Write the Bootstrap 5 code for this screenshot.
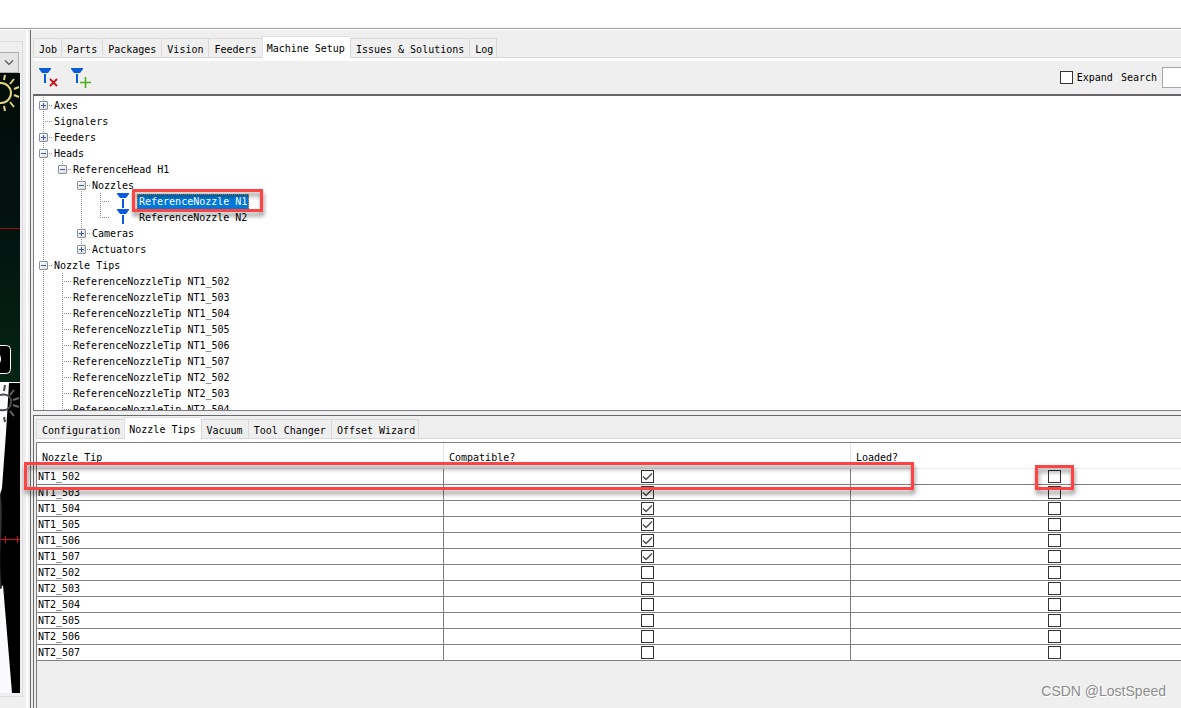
<!DOCTYPE html>
<html lang="en">
<head>
<meta charset="utf-8">
<meta name="viewport" content="width=device-width, initial-scale=1">
<title>Machine Setup</title>
<link href="https://cdn.jsdelivr.net/npm/bootstrap@5.3.0/dist/css/bootstrap.min.css" rel="stylesheet">
<style>
  body { font: 10px/16px "DejaVu Sans Mono", monospace; color: #000; background: #efefef; overflow: hidden; }
  .titlebar { height: 29px; background: #fff; border-bottom: 1px solid #a0a0a0; }
  .workspace { border-top: 1px solid #fff; }
  .camera-dock { width: 31px; padding: 11px 7px 10px 0; border-right: 1px solid #6b6b6b; background: linear-gradient(#fff, #fff) 26px 0 / 2px 100% no-repeat; }
  .camera-group { border: 1px solid #dcdce4; border-left: 0; padding: 10px 3px 3px 0; }
  .camera-pick { position: relative; height: 21px; }
  .camera-pick select { width: 100%; height: 21px; appearance: none; border: 1px solid #adadad; border-left: 0; background: #e5e5e5; border-radius: 0; padding: 0; }
  .camera-pick svg { position: absolute; right: 5px; top: 8px; pointer-events: none; }
  .camera-view { display: block; width: 20px; height: 310px; }
  .right-pane { min-width: 0; padding: 6px 0 0 2px; }

  .swing-tabs { border-bottom: 1px solid #d9d9d9; align-items: flex-end; flex-wrap: nowrap; }
  .swing-tabs .nav-link { border: 1px solid #d9d9d9; border-right: 0; border-bottom: 0; border-radius: 0; margin: 0; padding: 3px 5px 0; height: 19px; line-height: 16px; color: #000; background: #efefef; white-space: nowrap; }
  .swing-tabs .nav-item:first-child .nav-link { padding-right: 4px; }
  .swing-tabs .nav-link.active { height: 22px; margin-bottom: -1px; padding: 3px 5px 0 4px; background: #fff; color: #000; }
  .swing-tabs .nav-item:last-child .nav-link { border-right: 1px solid #d9d9d9; padding-right: 3px; }
  .tab-lip { height: 3px; background: #fff; }

  .toolbar { height: 33px; padding: 0 0 0 6px; }
  .tool { border: 0; background: none; padding: 0; width: 20px; height: 20px; display: flex; }
  .tick { appearance: none; display: block; width: 13px; height: 13px; margin: 0; border: 1px solid #333; border-radius: 0; background: #fff; }
  .tick:checked { background: #fff url("data:image/svg+xml,%3Csvg xmlns='http://www.w3.org/2000/svg' viewBox='0 0 11 11'%3E%3Cpath d='M1 5.5l3 3L10 2.500' fill='none' stroke='%23444' stroke-width='1.300'/%3E%3C/svg%3E"); }
  .search-box { width: 19px; height: 21px; margin-left: 5px; border: 1px solid #a5a5aa; border-right: 0; padding: 0 2px; background: #fff; }

  .tree-pane { height: 317px; border: solid #7f7b86; border-width: 2px 0 1px 1px; border-top-color: #696469; padding-top: 1px; background: #fff; overflow: hidden; }
  .tree, .tree ul { list-style: none; margin: 0; padding: 0; }
  .tree li { --dots: #909090; padding-left: 19px;
    background:
      repeating-linear-gradient(var(--dots) 0 1px, transparent 1px 2px) 9px 0 / 1px 100% no-repeat,
      repeating-linear-gradient(90deg, var(--dots) 0 1px, transparent 1px 2px) 9px 8px / 10px 1px no-repeat; }
  .tree li:last-child:not(.continues) { background-size: 1px 9px, 10px 1px; }
  .node { display: flex; align-items: center; height: 16px; white-space: nowrap; padding: 2px 0 0 1px; position: relative; }
  .twist { width: 9px; height: 9px; flex: none; margin: 0 6px 2px -15px; padding: 0; border: 1px solid #8a8f98; border-radius: 1px; display: flex;
    background: linear-gradient(#3a5aa8, #3a5aa8) 1px 3px / 5px 1px no-repeat, linear-gradient(135deg, #fff, #dcdcdc); }
  .twist.closed { background: linear-gradient(#3a5aa8, #3a5aa8) 1px 3px / 5px 1px no-repeat, linear-gradient(#3a5aa8, #3a5aa8) 3px 1px / 1px 5px no-repeat, linear-gradient(135deg, #fff, #dcdcdc); }
  .nozzle { flex: none; margin: 0 10px 2px 6px; }
  .picked { background: #0078d7; color: #fff; outline: 1px dotted #e8913a; outline-offset: -1px; padding: 0 2px; margin-left: -2px; }

  .lower-pane { border: solid #696969; border-width: 1px 0 0 1px; margin-top: 4px; padding: 1px 0 0 2px; }
  .grid-wrap { position: relative; }
  .grid-clip { overflow: hidden; border: solid #7f7b86; border-width: 1px 0 0 1px; }
  .tips { width: 1221px; table-layout: fixed; border-collapse: separate; border-spacing: 0; background: #fff; }
  .tips th { height: 26px; padding: 4px 5px 0; line-height: 16px; font-weight: 400; border-right: 1px solid #e5e5e5; border-bottom: 1px solid #ececec; }
  .tips td { height: 16px; padding: 0 1px; line-height: 15px; border-right: 1px solid #808080; border-bottom: 1px solid #808080; }
  .tips .tick { margin: 0 auto; }

  .callout { position: absolute; border: 3px solid #ff4343; filter: drop-shadow(1px 4px 2px rgba(0,0,0,.45)); pointer-events: none; z-index: 2; }
  .callout-node { left: 22px; top: -4px; width: 131px; height: 23px; }
  .callout-row { left: -12px; top: 20px; width: 890px; height: 28px; }
  .callout-loaded { left: 999px; top: 23px; width: 39px; height: 25px; }
  .watermark { position: absolute; right: 15px; bottom: 8px; font: 14px/18px "Liberation Sans", sans-serif; color: #8d8d8d; text-shadow: 1px 1px 0 #fff; }
</style>
</head>
<body>
<svg width="0" height="0" class="position-absolute" aria-hidden="true">
  <symbol id="nozzle" viewBox="0 0 12 16"><path d="M0 0H12V1L9 5H3L0 1Z M5 6H7V15H5Z" fill="#0a5bdc"/></symbol>
</svg>
<div class="d-flex flex-column vh-100">
  <header class="titlebar flex-shrink-0"></header>
  <div class="workspace d-flex flex-grow-1">
    <aside class="camera-dock flex-shrink-0">
      <div class="camera-group">
        <div class="camera-pick">
          <select aria-label="Camera"><option></option></select>
          <svg width="10" height="6" viewBox="0 0 10 6"><path d="M1 .5L5 4.500L9 .5" fill="none" stroke="#555" stroke-width="1.200"/></svg>
        </div>
        <svg class="camera-view" viewBox="0 0 20 310">
          <defs><linearGradient id="pcb" x2="0" y2="1"><stop offset="0" stop-color="#020b08"/><stop offset=".5" stop-color="#031310"/><stop offset="1" stop-color="#042413"/></linearGradient></defs>
          <rect width="20" height="310" fill="url(#pcb)"/>
          <g fill="none" stroke="#ded57c" stroke-width="2"><circle cx="1" cy="20" r="10"/><path d="M4 7L5 2M10 11L14 6M14 16L19 14M14 22L19 24M10 29L14 34M4 33L5 38"/></g>
          <path d="M0 155.500H20" stroke="#a00d12"/>
          <rect x="-10" y="272.500" width="20.500" height="28" rx="4" fill="#000" stroke="#fff"/>
          <path d="M0 282Q2 286 0 290Z" fill="#fff"/>
          <path d="M0 309.500H20" stroke="#fff"/>
        </svg>
        <svg class="camera-view" viewBox="0 0 20 310">
          <rect width="20" height="310" fill="#000"/>
          <path d="M0 0H9L6 50L2 105L0 112Z M0 206L3 202L12 310H0Z" fill="#fafafc"/>
          <path d="M0 108Q3 124 1 155T2 205L0 206Z" fill="#333"/>
          <g fill="none" stroke="#4a4a4a" stroke-width="2"><path d="M0 12C7 10 12 14 11 20S7 28 0 27M4 8L5 2M4 34L5 39"/><path d="M10 12L14 7M13 17L19 15M13 22L19 24M10 28L14 33" stroke="#666"/></g>
          <path d="M0 156.500H20M5.500 153V160M17.500 153V160" stroke="#c4161a" fill="none"/>
        </svg>
      </div>
    </aside>

    <main class="right-pane flex-grow-1 d-flex flex-column">
      <ul class="nav nav-tabs swing-tabs">
        <li class="nav-item"><button class="nav-link">Job</button></li>
        <li class="nav-item"><button class="nav-link">Parts</button></li>
        <li class="nav-item"><button class="nav-link">Packages</button></li>
        <li class="nav-item"><button class="nav-link">Vision</button></li>
        <li class="nav-item"><button class="nav-link">Feeders</button></li>
        <li class="nav-item"><button class="nav-link active">Machine Setup</button></li>
        <li class="nav-item"><button class="nav-link">Issues &amp; Solutions</button></li>
        <li class="nav-item"><button class="nav-link">Log</button></li>
      </ul>
      <div class="tab-lip"></div>
      <div class="toolbar d-flex align-items-center justify-content-between flex-shrink-0">
        <div class="d-flex gap-2">
          <button class="tool me-1" aria-label="Remove nozzle"><svg width="20" height="20" viewBox="0 0 20 20"><path d="M0 0H12V1L9 5H3L0 1Z M5 6H7V15H5Z" fill="#0a5bdc"/><path d="M11 11L18 18M18 11L11 18" stroke="#c8141c" stroke-width="1.800"/></svg></button>
          <button class="tool" aria-label="Add nozzle"><svg width="20" height="20" viewBox="0 0 20 20"><path d="M0 0H12V1L9 5H3L0 1Z M5 6H7V15H5Z" fill="#0a5bdc"/><path d="M9 14.500H20M14.500 9V20" stroke="#4caf14" stroke-width="1.600"/></svg></button>
        </div>
        <div class="d-flex align-items-center">
          <input class="tick" type="checkbox" id="expand"><label for="expand" class="ms-1 me-2">Expand</label>
          <label for="search">Search</label><input class="search-box" type="text" id="search">
        </div>
      </div>

      <div class="tree-pane flex-shrink-0">
        <ul class="tree">
          <li><div class="node"><button class="twist closed" aria-label="Open Axes"></button>Axes</div></li>
          <li><div class="node">Signalers</div></li>
          <li><div class="node"><button class="twist closed" aria-label="Open Feeders"></button>Feeders</div></li>
          <li><div class="node"><button class="twist" aria-label="Close Heads"></button>Heads</div>
            <ul><li><div class="node"><button class="twist" aria-label="Close head H1"></button>ReferenceHead H1</div>
              <ul>
                <li><div class="node"><button class="twist" aria-label="Close Nozzles"></button>Nozzles</div>
                  <ul>
                    <li><div class="node"><svg class="nozzle" width="12" height="16"><use href="#nozzle"/></svg><span class="picked">ReferenceNozzle N1</span><span class="callout callout-node"></span></div></li>
                    <li><div class="node"><svg class="nozzle" width="12" height="16"><use href="#nozzle"/></svg>ReferenceNozzle N2</div></li>
                  </ul></li>
                <li><div class="node"><button class="twist closed" aria-label="Open Cameras"></button>Cameras</div></li>
                <li><div class="node"><button class="twist closed" aria-label="Open Actuators"></button>Actuators</div></li>
              </ul></li></ul></li>
          <li class="continues"><div class="node"><button class="twist" aria-label="Close Nozzle Tips"></button>Nozzle Tips</div>
            <ul>
              <li><div class="node">ReferenceNozzleTip NT1_502</div></li>
              <li><div class="node">ReferenceNozzleTip NT1_503</div></li>
              <li><div class="node">ReferenceNozzleTip NT1_504</div></li>
              <li><div class="node">ReferenceNozzleTip NT1_505</div></li>
              <li><div class="node">ReferenceNozzleTip NT1_506</div></li>
              <li><div class="node">ReferenceNozzleTip NT1_507</div></li>
              <li><div class="node">ReferenceNozzleTip NT2_502</div></li>
              <li><div class="node">ReferenceNozzleTip NT2_503</div></li>
              <li class="continues"><div class="node">ReferenceNozzleTip NT2_504</div></li>
            </ul></li>
        </ul>
      </div>

      <section class="lower-pane flex-grow-1 d-flex flex-column">
        <ul class="nav nav-tabs swing-tabs">
          <li class="nav-item"><button class="nav-link">Configuration</button></li>
          <li class="nav-item"><button class="nav-link active">Nozzle Tips</button></li>
          <li class="nav-item"><button class="nav-link">Vacuum</button></li>
          <li class="nav-item"><button class="nav-link">Tool Changer</button></li>
          <li class="nav-item"><button class="nav-link">Offset Wizard</button></li>
        </ul>
        <div class="tab-lip"></div>
        <div class="grid-wrap flex-grow-1 d-flex flex-column">
          <div class="grid-clip flex-grow-1">
            <table class="tips">
              <thead><tr><th>Nozzle Tip</th><th>Compatible?</th><th>Loaded?</th></tr></thead>
              <tbody>
                <tr><td>NT1_502</td><td><input class="tick" type="checkbox" aria-label="NT1_502 compatible" checked></td><td><input class="tick" type="checkbox" aria-label="NT1_502 loaded"></td></tr>
                <tr><td>NT1_503</td><td><input class="tick" type="checkbox" aria-label="NT1_503 compatible" checked></td><td><input class="tick" type="checkbox" aria-label="NT1_503 loaded"></td></tr>
                <tr><td>NT1_504</td><td><input class="tick" type="checkbox" aria-label="NT1_504 compatible" checked></td><td><input class="tick" type="checkbox" aria-label="NT1_504 loaded"></td></tr>
                <tr><td>NT1_505</td><td><input class="tick" type="checkbox" aria-label="NT1_505 compatible" checked></td><td><input class="tick" type="checkbox" aria-label="NT1_505 loaded"></td></tr>
                <tr><td>NT1_506</td><td><input class="tick" type="checkbox" aria-label="NT1_506 compatible" checked></td><td><input class="tick" type="checkbox" aria-label="NT1_506 loaded"></td></tr>
                <tr><td>NT1_507</td><td><input class="tick" type="checkbox" aria-label="NT1_507 compatible" checked></td><td><input class="tick" type="checkbox" aria-label="NT1_507 loaded"></td></tr>
                <tr><td>NT2_502</td><td><input class="tick" type="checkbox" aria-label="NT2_502 compatible"></td><td><input class="tick" type="checkbox" aria-label="NT2_502 loaded"></td></tr>
                <tr><td>NT2_503</td><td><input class="tick" type="checkbox" aria-label="NT2_503 compatible"></td><td><input class="tick" type="checkbox" aria-label="NT2_503 loaded"></td></tr>
                <tr><td>NT2_504</td><td><input class="tick" type="checkbox" aria-label="NT2_504 compatible"></td><td><input class="tick" type="checkbox" aria-label="NT2_504 loaded"></td></tr>
                <tr><td>NT2_505</td><td><input class="tick" type="checkbox" aria-label="NT2_505 compatible"></td><td><input class="tick" type="checkbox" aria-label="NT2_505 loaded"></td></tr>
                <tr><td>NT2_506</td><td><input class="tick" type="checkbox" aria-label="NT2_506 compatible"></td><td><input class="tick" type="checkbox" aria-label="NT2_506 loaded"></td></tr>
                <tr><td>NT2_507</td><td><input class="tick" type="checkbox" aria-label="NT2_507 compatible"></td><td><input class="tick" type="checkbox" aria-label="NT2_507 loaded"></td></tr>
              </tbody>
            </table>
          </div>
          <div class="callout callout-row"></div>
          <div class="callout callout-loaded"></div>
          <div class="watermark">CSDN @LostSpeed</div>
        </div>
      </section>
    </main>
  </div>
</div>
<script src="https://cdn.jsdelivr.net/npm/bootstrap@5.3.0/dist/js/bootstrap.bundle.min.js"></script>
</body>
</html>
